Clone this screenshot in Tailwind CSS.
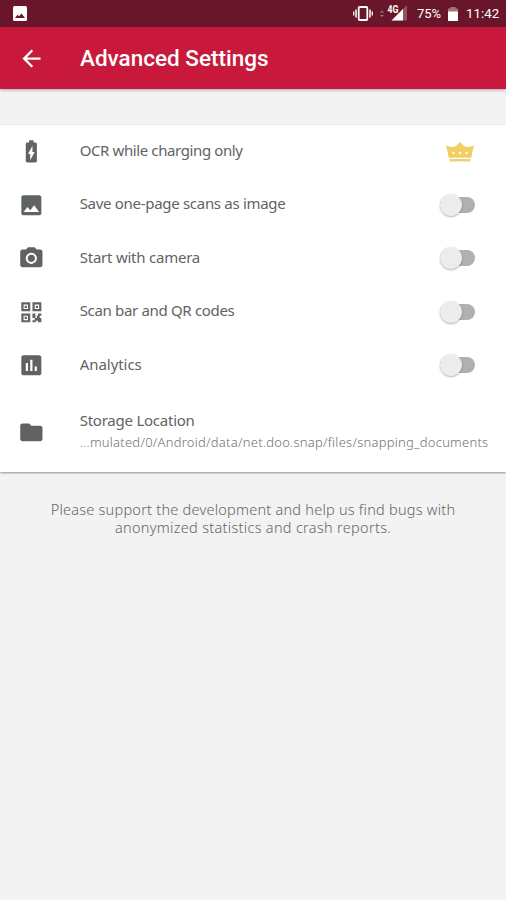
<!DOCTYPE html>
<html lang="en">
<head>
<meta charset="utf-8">
<title>Advanced Settings</title>
<script src="https://cdn.jsdelivr.net/npm/@tailwindcss/browser@4"></script>
</head>
<body class="w-[506px] h-[900px] overflow-hidden bg-[#f3f3f3] font-['Noto_Sans',sans-serif] text-[#5f6364]">
<div class="flex flex-col h-full">
  <div class="h-[27px] shrink-0 bg-[#69162a] flex items-center pl-[13px] pr-[6px] text-white font-[Roboto,sans-serif]">
    <svg class="w-[14px] h-[15px] block" viewBox="0 0 14 15"><rect width="14" height="15" rx="1.5" fill="#fff"/><path d="M2 12l2.500-3.200 1.500 1.500L8.500 7.500 12 12z" fill="#69162a"/></svg>
    <div class="flex-1"></div>
    <svg class="w-[56px] h-[20px] block" viewBox="352 4 56 20">
      <rect x="358.700" y="7" width="8.600" height="13" rx="1" fill="none" stroke="#fff" stroke-width="1.800"/>
      <path d="M356 9.500v8M370 9.500v8" stroke="#fff" stroke-width="1.500"/><path d="M353.700 11.500v4M372.300 11.500v4" stroke="#fff" stroke-width="1.300"/>
      <path d="M380 12.500l2-2 2 2zM380 15l2 2 2-2z" fill="#a5737f"/>
      <path d="M407 5v15.500h-15.500z" fill="#8f5361"/><path d="M403 9v11.500H391.500z" fill="#fff"/>
      <text x="387.500" y="12.800" font-size="10" font-weight="700" textLength="11" lengthAdjust="spacingAndGlyphs" fill="#fff" stroke="#69162a" stroke-width="1.500" paint-order="stroke">4G</text>
    </svg>
    <span class="ml-[9px] text-[13px] leading-none w-[25px] whitespace-nowrap">75%</span>
    <svg class="ml-[5px] w-[12px] h-[16px] block" viewBox="0 0 12 16"><path d="M3.500 1h5v1.500H11V6H1V2.500h2.500z" fill="#a5737f"/><path d="M1 5.500h10V15H1z" fill="#fff"/></svg>
    <span class="ml-[7px] text-[13.300px] leading-none w-[34px] whitespace-nowrap">11:42</span>
  </div>
  <header class="relative h-[62px] shrink-0 bg-[#c8193c] flex items-center shadow-[0_1px_3px_rgba(80,0,20,0.35)]">
    <svg class="ml-[18px] w-[27px] h-[27px] block" viewBox="0 0 24 24" fill="#fff"><path d="M20 11H7.830l5.590-5.590L12 4l-8 8 8 8 1.410-1.410L7.830 13H20v-2z"/></svg>
    <h1 class="ml-[35px] mt-[1px] text-[22.500px] leading-none font-medium text-white font-[Roboto,sans-serif] whitespace-nowrap">Advanced Settings</h1>
  </header>
  <main class="mt-[36px] h-[347px] shrink-0 bg-white shadow-[0_1px_2px_rgba(0,0,0,0.4)] text-[15px] leading-[20px] whitespace-nowrap [&_svg]:block">
    <div class="h-[53.400px] flex items-center pl-[18px] pr-[31px]">
      <svg class="w-[26.700px] h-[26.700px]" viewBox="0 0 24 24" fill="#5f6364"><path d="M15.670 4H14V2h-4v2H8.330C7.600 4 7 4.600 7 5.330v15.330C7 21.400 7.600 22 8.330 22h7.330c.740 0 1.340-.600 1.340-1.330V5.330C17 4.600 16.400 4 15.670 4zM11 20v-5.500H9L13 7v5.500h2L11 20z"/></svg>
      <span class="ml-[35px] -mt-[4px] flex-1 tracking-[-0.39px]">OCR while charging only</span>
      <svg class="w-[30px] h-[22px]" viewBox="0 0 29 22"><path d="M.500 4Q5 7 9 5.500Q12 4 14.500 1Q17 4 20 5.500Q24 7 28.500 4L25.700 16.800H3.300z" fill="#f2cf66"/><path d="M4 18h21v2.400H4z" fill="#f2cf66"/><g fill="#fffbe8"><circle cx="8" cy="12" r="1.300"/><circle cx="14.500" cy="12" r="1.300"/><circle cx="21" cy="12" r="1.300"/></g></svg>
    </div>
    <div class="h-[53.400px] flex items-center pl-[18px] pr-[31px]">
      <svg class="w-[26.700px] h-[26.700px]" viewBox="0 0 24 24" fill="#5f6364"><path d="M21 19V5c0-1.100-.900-2-2-2H5c-1.100 0-2 .900-2 2v14c0 1.100.900 2 2 2h14c1.100 0 2-.900 2-2zM8.500 13.500l2.500 3.010L14.500 12l4.500 6H5l3.500-4.500z"/></svg>
      <span class="ml-[35px] -mt-[4px] flex-1 tracking-[-0.3px]">Save one-page scans as image</span>
      <span class="w-[35px] h-[16px] rounded-full bg-[#b0b0b0] flex items-center"><span class="size-[22px] shrink-0 rounded-full bg-[#ececec] shadow-[0_1px_2px_rgba(0,0,0,0.3)]"></span></span>
    </div>
    <div class="h-[53.400px] flex items-center pl-[18px] pr-[31px]">
      <svg class="w-[26.700px] h-[26.700px]" viewBox="0 0 24 24" fill="#5f6364"><circle cx="12" cy="12" r="3.200"/><path fill-rule="evenodd" d="M9 2L7.170 4H4c-1.100 0-2 .900-2 2v12c0 1.100.900 2 2 2h16c1.100 0 2-.900 2-2V6c0-1.100-.900-2-2-2h-3.170L15 2H9zm3 15c-2.760 0-5-2.240-5-5s2.240-5 5-5 5 2.240 5 5-2.240 5-5 5z"/></svg>
      <span class="ml-[35px] -mt-[3px] flex-1 tracking-[-0.23px]">Start with camera</span>
      <span class="w-[35px] h-[16px] rounded-full bg-[#b0b0b0] flex items-center"><span class="size-[22px] shrink-0 rounded-full bg-[#ececec] shadow-[0_1px_2px_rgba(0,0,0,0.3)]"></span></span>
    </div>
    <div class="h-[53.400px] flex items-center pl-[18px] pr-[31px]">
      <svg class="w-[26.700px] h-[26.700px]" viewBox="0 0 24 24" fill="#5f6364"><path fill-rule="evenodd" d="M3 3h8v8H3zM5 5v4h4V5zM13 3h8v8h-8zM15 5v4h4V5zM3 13h8v8H3zM5 15v4h4v-4z"/><path d="M6 6h2v2H6zM16 6h2v2h-2zM6 16h2v2H6zM13 13h2.500v2H18v-2h3v2h-1.500v2H21v4h-3v-1.500h-2V21h-3v-2h2v-2h-2zM15.500 15.500v1.500H17v-1.500z"/></svg>
      <span class="ml-[35px] -mt-[4px] flex-1 tracking-[-0.33px]">Scan bar and QR codes</span>
      <span class="w-[35px] h-[16px] rounded-full bg-[#b0b0b0] flex items-center"><span class="size-[22px] shrink-0 rounded-full bg-[#ececec] shadow-[0_1px_2px_rgba(0,0,0,0.3)]"></span></span>
    </div>
    <div class="h-[53.400px] flex items-center pl-[18px] pr-[31px]">
      <svg class="w-[26.700px] h-[26.700px]" viewBox="0 0 24 24" fill="#5f6364"><path d="M19 3H5c-1.100 0-2 .900-2 2v14c0 1.100.900 2 2 2h14c1.100 0 2-.900 2-2V5c0-1.100-.900-2-2-2zM9 17H7v-7h2v7zm4 0h-2V7h2v10zm4 0h-2v-4h2v4z"/></svg>
      <span class="ml-[35px] -mt-[3px] flex-1 tracking-[-0.05px]">Analytics</span>
      <span class="w-[35px] h-[16px] rounded-full bg-[#b0b0b0] flex items-center"><span class="size-[22px] shrink-0 rounded-full bg-[#ececec] shadow-[0_1px_2px_rgba(0,0,0,0.3)]"></span></span>
    </div>
    <div class="h-[80px] flex items-center pl-[18px]">
      <svg class="w-[26.700px] h-[26.700px]" viewBox="0 0 24 24" fill="#5f6364"><path d="M10 4H4c-1.100 0-1.990.900-1.990 2L2 18c0 1.100.900 2 2 2h16c1.100 0 2-.900 2-2V8c0-1.100-.900-2-2-2h-8l-2-2z"/></svg>
      <div class="ml-[35px] flex flex-col gap-[2px] -mt-[1px]">
        <span class="tracking-[-0.24px]">Storage Location</span>
        <span class="text-[13px] text-[#6f7373] font-light tracking-[0.245px]">...mulated/0/Android/data/net.doo.snap/files/snapping_documents</span>
      </div>
    </div>
  </main>
  <div class="mt-[28px] flex flex-col items-center text-[14.500px] leading-[18px] text-[#626666] font-light whitespace-nowrap">
    <p class="tracking-[0.235px]">Please support the development and help us find bugs with</p>
    <p class="tracking-[0.3px]">anonymized statistics and crash reports.</p>
  </div>
</div>
</body>
</html>
